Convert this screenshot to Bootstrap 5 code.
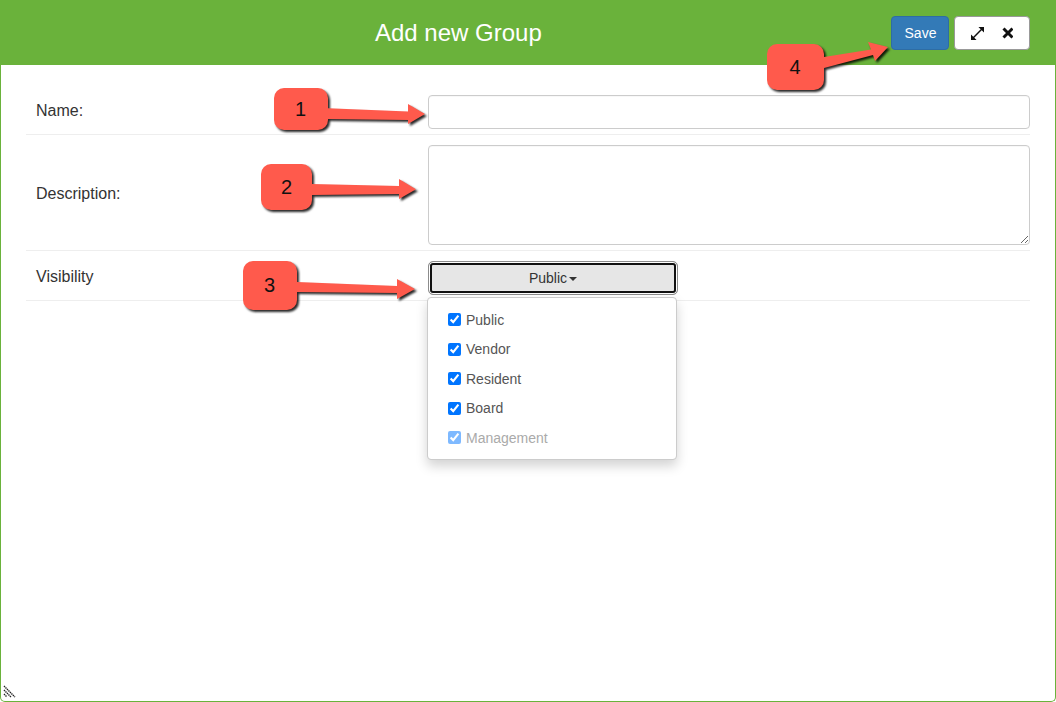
<!DOCTYPE html>
<html lang="en">
<head>
<meta charset="utf-8">
<title>Add new Group</title>
<link href="https://cdn.jsdelivr.net/npm/bootstrap@5.3.0/dist/css/bootstrap.min.css" rel="stylesheet">
<style>
html,body{height:100%;margin:0;background:#fff;overflow:hidden}
body{font-family:"Liberation Sans",Arial,sans-serif;color:#333}
.win{position:relative;width:1056px;height:702px;border:1px solid #6ab23b;border-top:0;border-radius:0 0 5px 5px}
.win-head{height:65px;background:#6ab23b;padding:16px 26px 0 374px;margin:0 -1px}
.win-title{font-size:24px;line-height:34px;margin:0;font-weight:400;color:#fff;padding-left:1px}
.btn-save{width:58px;height:34px;padding:0 0 0 1px;font-size:14px;line-height:32px;background:#337ab7;border:1px solid #2e6da4;color:#fff;border-radius:4px}
.btn-save:hover{background:#337ab7;color:#fff;border-color:#2e6da4}
.win-tools{width:76px;height:34px;margin-left:5px;background:#fff;border:1px solid #999;border-radius:4px;padding-left:7px}
.tool-btn{width:30px;height:32px;padding:0;border:0;background:transparent;line-height:0}
.form-area{padding:20px 25px 0}
.form-line{padding:10px 0 5px;border-bottom:1px solid #eee}
.line-label{width:402px;padding:0 10px 2px;font-size:16px;line-height:22px;color:#333}
.line-field{flex:1}
.form-control.fld{border:1px solid #ccc;border-radius:4px;height:34px;padding:6px 12px;font-size:14px;box-shadow:inset 0 1px 1px rgba(0,0,0,.03)}
textarea.form-control.fld{height:100px;resize:both}
.vis-wrap{position:relative;width:250px}
.vis-btn{width:250px;height:34px;padding:0;font-size:14px;line-height:32px;color:#333;background:#e6e6e6;border:1px solid #8c8c8c;border-radius:5px;box-shadow:inset 0 0 0 1px #fff,inset 0 0 0 3px #111}
.vis-btn:hover,.vis-btn:active{background:#e6e6e6!important;color:#333!important;border-color:#8c8c8c!important}
.vis-btn.dropdown-toggle::after{margin-left:2px;vertical-align:2px;border-top-width:4px;border-right-width:4px;border-left-width:4px}
.vis-menu.dropdown-menu{position:absolute;top:36px;left:-1px;width:250px;min-width:0;margin:0;padding:7px 0 6px;border:1px solid #ccc;border-radius:4px;box-shadow:0 6px 12px rgba(0,0,0,.175);font-size:14px;z-index:5}
.vis-item{display:flex;align-items:center;height:29.5px;padding-left:20px;margin:0;color:#555;line-height:20px}
.vis-item input{margin:0 5px 0 0;width:13px;height:13px}
.vis-item.off{color:#aaa}
.vis-item.off input{opacity:.5}
.grip{position:absolute;left:2px;bottom:3px;line-height:0}
.marks{position:absolute;left:-1px;top:0;width:1056px;height:702px;pointer-events:none;z-index:10}
.marks .shape{fill:#ff5a4c;filter:drop-shadow(2px 2px 1px rgba(0,0,0,.85))}
.marks text{font-family:"Liberation Sans",Arial,sans-serif;font-size:20px;fill:#111;text-anchor:middle}
</style>
</head>
<body>
<div class="win">
  <div class="win-head d-flex align-items-start">
    <h1 class="win-title me-auto">Add new Group</h1>
    <button type="button" class="btn btn-save">Save</button>
    <div class="win-tools d-flex">
      <button type="button" class="btn tool-btn" aria-label="Expand">
        <svg width="13" height="13" viewBox="0 0 14 14"><path d="M8 0H14V6L11.55 3.55 3.55 11.55 6 14H0V8L2.45 10.45 10.45 2.45Z" fill="#111"/></svg>
      </button>
      <button type="button" class="btn tool-btn" aria-label="Close">
        <svg width="12" height="12" viewBox="-1 0 12 12"><path d="M1.5 1.5 10.5 10.5M10.5 1.5 1.5 10.5" stroke="#111" stroke-width="3" fill="none"/></svg>
      </button>
    </div>
  </div>
  <form class="form-area">
    <div class="form-line d-flex align-items-center">
      <label class="line-label" for="fName">Name:</label>
      <div class="line-field"><input id="fName" class="form-control fld" type="text"></div>
    </div>
    <div class="form-line d-flex align-items-center">
      <label class="line-label" for="fDesc">Description:</label>
      <div class="line-field d-flex"><textarea id="fDesc" class="form-control fld"></textarea></div>
    </div>
    <div class="form-line d-flex align-items-center">
      <div class="line-label">Visibility</div>
      <div class="line-field">
        <div class="vis-wrap">
          <button type="button" class="btn vis-btn dropdown-toggle">Public</button>
          <div class="dropdown-menu show vis-menu">
            <label class="vis-item"><input type="checkbox" checked>Public</label>
            <label class="vis-item"><input type="checkbox" checked>Vendor</label>
            <label class="vis-item"><input type="checkbox" checked>Resident</label>
            <label class="vis-item"><input type="checkbox" checked>Board</label>
            <label class="vis-item off"><input type="checkbox" checked>Management</label>
          </div>
        </div>
      </div>
    </div>
  </form>
  <div class="grip">
    <svg width="14" height="14" viewBox="0 0 14 14"><path d="M1 2 12 13M1 6 8 13M1 10 4 13" stroke="#222" stroke-width="1.4" stroke-dasharray="1.4 .7" fill="none"/></svg>
  </div>
  <svg class="marks" viewBox="0 0 1056 702">
    <g class="shape">
      <path d="M328 108.3 408 111.5V104L425 114 408 124V120L328 119Z"/>
      <rect x="274" y="88" width="54" height="42" rx="10"/>
    </g>
    <g class="shape">
      <path d="M312 184 399 186V179L416 189.3 399 199V194L312 195Z"/>
      <rect x="261" y="164" width="51" height="46" rx="10"/>
    </g>
    <g class="shape">
      <path d="M297 282 397 286V279L415 289 397 299V293L297 292Z"/>
      <rect x="243" y="261" width="54" height="49" rx="10"/>
    </g>
    <g class="shape">
      <path d="M824 57 871 49.5 868 42 888 47 875 61 873 55 824 68Z"/>
      <rect x="767" y="44" width="57" height="46" rx="10"/>
    </g>
    <text x="300.5" y="116">1</text>
    <text x="286.5" y="194">2</text>
    <text x="269.5" y="292">3</text>
    <text x="795" y="74">4</text>
  </svg>
</div>
</body>
</html>
